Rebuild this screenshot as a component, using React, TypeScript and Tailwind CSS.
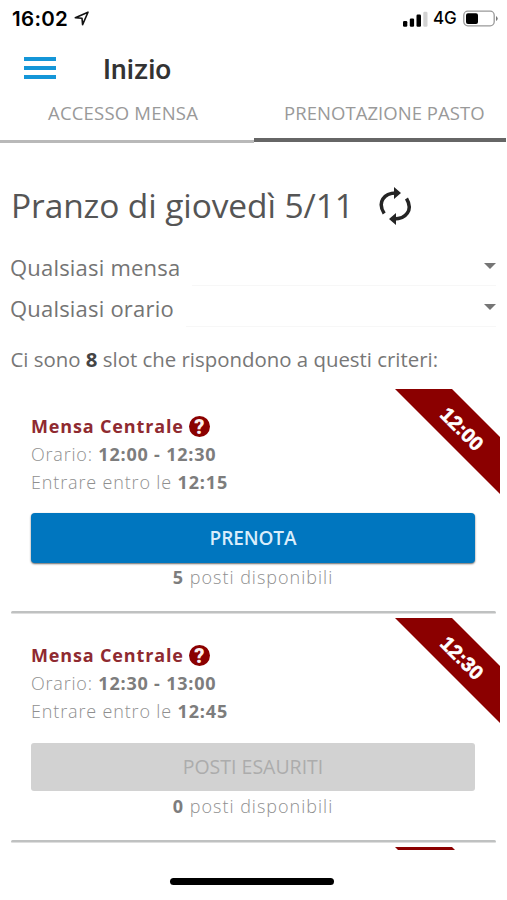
import React from "react";

const sans = "font-['Open_Sans','Noto_Sans',sans-serif]";

type Slot = { start: string; end: string; enter: string; seats: number };

const slots: Slot[] = [
  { start: "12:00", end: "12:30", enter: "12:15", seats: 5 },
  { start: "12:30", end: "13:00", enter: "12:45", seats: 0 },
];

function StatusBar() {
  return (
    <div className="flex h-[37px] shrink-0 items-center pl-[12px] pr-[9px] font-['Inter',sans-serif] text-black">
      <span className="w-[57px] text-[20.5px] font-semibold leading-[37px] tracking-[0.3px]">16:02</span>
      <svg className="ml-[5px] h-[15px] w-[16px]" viewBox="0 0 16 15" fill="none" stroke="#111" strokeWidth="1.6" strokeLinejoin="round">
        <path d="M1.3 6.7 14 1.2 8.6 13.6 8 7.2Z" />
      </svg>
      <svg className="ml-auto h-[16px] w-[25px]" viewBox="0 0 25 16">
        <rect x="0" y="10" width="4.300" height="5.800" rx="1.2" />
        <rect x="6.800" y="7.500" width="4.300" height="8.300" rx="1.2" />
        <rect x="13.500" y="3.500" width="4.500" height="12.300" rx="1.2" />
        <rect x="20.300" y="0.800" width="4.200" height="15" rx="1.2" fill="#d2d2d2" />
      </svg>
      <span className="ml-[5px] w-[24px] text-[17px] font-medium leading-[39px] tracking-[-0.2px]">4G</span>
      <svg className="ml-[6px] h-[17px] w-[35px]" viewBox="0 0 35 17">
        <rect x="0.800" y="1.200" width="30.400" height="14.600" rx="4" fill="none" stroke="#999" strokeWidth="1.3" />
        <rect x="3" y="3.300" width="12" height="10.600" rx="2" />
        <path d="M33 6v5q1.700-1 1.700-2.500T33 6Z" fill="#777" />
      </svg>
    </div>
  );
}

function Filter({ label }: { label: string }) {
  return (
    <div className="mr-[11px] ml-[10px] flex h-[41px] items-center justify-between">
      <span className="pt-[4px] text-[22px] leading-[37px] tracking-[0.2px] text-[#747474]">{label}</span>
      <span className="ml-[12px] flex h-full flex-1 items-center justify-end border-b border-[#f7f7f7]">
        <span className="mt-[1px] h-0 w-0 border-x-[6px] border-t-[6px] border-x-transparent border-t-[#757575]" />
      </span>
    </div>
  );
}

function SlotCard({ slot }: { slot: Slot }) {
  const open = slot.seats > 0;
  return (
    <section className="relative mr-[7px] ml-[11px] h-[229px] shrink-0 overflow-hidden pr-[25px] pl-[20px] text-[18px] leading-[28px] text-[#8f8f8f]">
      <Ribbon time={slot.start} />
      <div className="flex h-[51px] items-end">
        <span className="font-bold tracking-[0.85px] text-[#8f2a30]">Mensa Centrale</span>
        <HelpMark />
      </div>
      <p className="font-light tracking-[0.8px]">
        Orario: <b className="font-bold text-[#7d7d7d]">{slot.start} - {slot.end}</b>
      </p>
      <p className="font-light tracking-[0.85px]">
        Entrare entro le <b className="font-bold text-[#7d7d7d]">{slot.enter}</b>
      </p>
      {open ? (
        <button className="mt-[17px] block h-[50px] w-full rounded-[4px] bg-[#0076bf] text-[19px] font-semibold tracking-[-0.1px] text-[#d9edfb] shadow-[0_1px_2px_rgba(0,0,0,0.6)]">
          PRENOTA
        </button>
      ) : (
        <button className="mt-[18px] mb-[1px] block h-[48px] w-full rounded-[3px] bg-[#d2d2d2] text-[19.5px] text-[#acacac]">
          POSTI ESAURITI
        </button>
      )}
      <p className="text-center font-light tracking-[1px]">
        <b className="font-bold text-[#7d7d7d]">{slot.seats}</b> posti disponibili
      </p>
      <div className="absolute right-[4px] bottom-[4px] left-0 h-[3px] rounded-full border-b border-[#dedede] bg-[#bfc1c1]" />
    </section>
  );
}

function HelpMark() {
  return (
    <span className="mb-[3px] ml-[5px] flex h-[21px] w-[21px] items-center justify-center rounded-full bg-[#8b0000] pt-[1px] font-['Roboto',sans-serif] text-[20px] font-black leading-[20px] text-[#fbf0f0]">
      ?
    </span>
  );
}

function Ribbon({ time }: { time?: string }) {
  return (
    <div className="absolute top-0 right-0 h-[105px] w-[105px] bg-[#8b0000] [clip-path:polygon(0_0,57px_0,105px_48px,105px_105px)]">
      {time && (
        <span className="absolute top-[26px] left-[37px] flex h-[28px] w-[60px] rotate-45 items-center justify-center font-['Liberation_Sans',Arial,sans-serif] text-[20px] font-bold text-white [-webkit-text-stroke:0.6px_white]">
          {time}
        </span>
      )}
    </div>
  );
}

export default function App() {
  return (
    <div className={`flex h-[900px] w-[507px] flex-col overflow-hidden bg-white ${sans}`}>
      <StatusBar />
      <header className="flex h-[60px] shrink-0 items-center pt-[2px] pl-[24px]">
        <div className="flex w-[32px] flex-col gap-[5px]">
          <i className="h-[4px] bg-[#1496d8]" />
          <i className="h-[4px] bg-[#1496d8]" />
          <i className="h-[4px] bg-[#1496d8]" />
        </div>
        <h1 className="mt-[4px] ml-[47px] font-['Roboto',sans-serif] text-[28px] font-medium leading-[36px] tracking-[0.1px] text-[#333]">Inizio</h1>
      </header>
      <nav className="flex h-[47px] shrink-0 text-[18.5px] leading-[32px] text-[#999]">
        <div className="h-[46px] w-[254px] border-b-[3px] border-[#b9b9b9] pl-[48px] tracking-[0.2px]">ACCESSO MENSA</div>
        <div className="h-[45px] w-[252px] border-b-[4px] border-[#666] pl-[30px] tracking-[0.05px]">PRENOTAZIONE PASTO</div>
      </nav>
      <div className="flex h-[101px] shrink-0 items-end pb-[14px] pl-[11px]">
        <h2 className="mb-[1px] w-[342px] text-[33.5px] leading-[50px] tracking-[-0.1px] whitespace-nowrap text-[#555]">Pranzo di giovedì 5/11</h2>
        <svg className="mb-[5px] ml-[25px] h-[40px] w-[34px]" viewBox="0 0 34 40" fill="none" stroke="#242424" strokeWidth="3.500">
          <path d="M6.200 27.500C-1 16 6 7 18 7M28.500 12.500C35.500 24 28 33 16 33" />
          <path d="m16 1 7 6-7 6ZM18 27l-7 6 7 6Z" fill="#242424" stroke="none" />
        </svg>
      </div>
      <Filter label="Qualsiasi mensa" />
      <Filter label="Qualsiasi orario" />
      <p className="h-[62px] shrink-0 pl-[10.5px] text-[20.4px] leading-[64px] text-[#777]">
        Ci sono <b className="text-[#444]">8</b> slot che rispondono a questi criteri:
      </p>
      <main className="flex h-[461px] shrink-0 flex-col overflow-hidden">
        {slots.map((slot) => (
          <SlotCard key={slot.start} slot={slot} />
        ))}
        <div className="relative mr-[7px] h-[105px] shrink-0">
          <Ribbon />
        </div>
      </main>
      <div className="mt-[28px] ml-[170px] h-[7px] w-[164px] shrink-0 rounded-full bg-black" />
    </div>
  );
}
